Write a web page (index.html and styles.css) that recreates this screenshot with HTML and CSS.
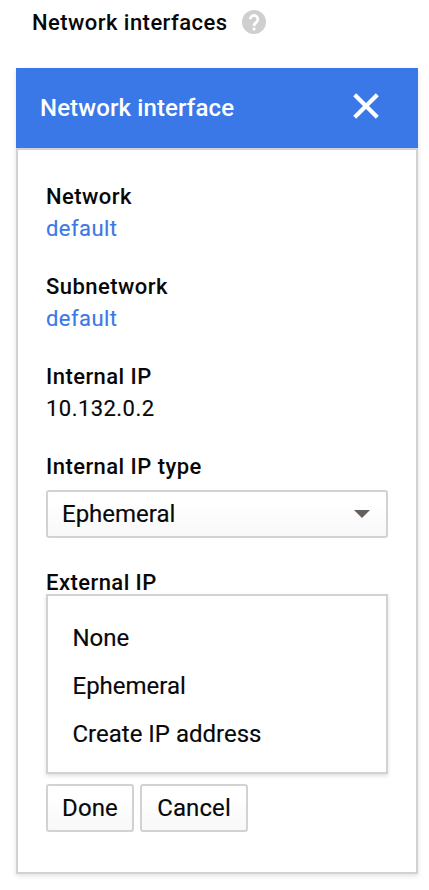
FILE: index.html
```html
<!DOCTYPE html>
<html lang="en">
<head>
<meta charset="utf-8">
<title>Network interfaces</title>
<link rel="stylesheet" href="styles.css">
</head>
<body>
<main class="page">
  <h1 class="title"><span class="title-text">Network interfaces</span>
    <svg class="help" width="24" height="24" viewBox="0 0 24 24" aria-hidden="true"><circle cx="12" cy="12" r="12" fill="#cfcfcf"/><path d="M8.2 9.2a3.8 3.8 0 1 1 6.4 2.8c-1.5 1.3-2.6 2-2.6 4" fill="none" stroke="#fff" stroke-width="2.7"/><rect x="10.6" y="17.6" width="2.8" height="2.8" fill="#fff"/></svg>
  </h1>
  <section class="card">
    <header class="card-header">
      <h2 class="card-title"><span class="card-title-text">Network interface</span></h2>
      <svg class="close" width="26" height="26" viewBox="0 0 26 26" aria-hidden="true"><path d="M1.7 1.7l22.6 22.6M24.3 1.7L1.7 24.3" stroke="#fff" stroke-width="4.2"/></svg>
    </header>
    <div class="card-body">
      <div class="field"><div class="label">Network</div><a class="value link">default</a></div>
      <div class="field"><div class="label">Subnetwork</div><a class="value link">default</a></div>
      <div class="field"><div class="label">Internal IP</div><div class="value">10.132.0.2</div></div>
      <div class="field"><div class="label">Internal IP type</div>
        <div class="select control"><span>Ephemeral</span><svg width="16" height="8" viewBox="0 0 16 8" aria-hidden="true"><path d="M0 0h16L8 8z" fill="#655f5c"/></svg></div>
      </div>
      <div class="label">External IP</div>
      <ul class="menu">
        <li>None</li>
        <li>Ephemeral</li>
        <li>Create IP address</li>
      </ul>
      <div class="actions">
        <button class="control button done">Done</button>
        <button class="control button cancel">Cancel</button>
      </div>
    </div>
  </section>
</main>
</body>
</html>
```
FILE: styles.css
```css
* { box-sizing: border-box; }

body {
  margin: 0;
  background: #fff;
  color: #080808;
  font-family: Roboto, "Liberation Sans", sans-serif;
  font-size: 22px;
}

.page {
  height: 890px;
  padding: 6px 11px 0 16px;
}

.title {
  display: flex;
  align-items: center;
  gap: 14px;
  height: 32px;
  margin: 0 0 30px;
  padding-left: 16px;
  font-size: 22px;
  font-weight: 500;
  letter-spacing: 0.45px;
}

.card { box-shadow: 0 2px 5px rgba(0, 0, 0, 0.12); }

.card-header {
  display: flex;
  align-items: center;
  justify-content: space-between;
  height: 80px;
  padding: 0 39px 0 24px;
  background: #3b78e7;
  color: #fff;
}

.close { margin-top: -4px; }

.card-title {
  margin: 0;
  font-size: 24px;
  font-weight: 500;
  letter-spacing: 0.12px;
}

.card-body {
  height: 726px;
  padding: 31px 28px 0;
  border: 2px solid #d2d2d2;
}

.field { margin-bottom: 26px; }

.label,
.value {
  display: block;
  height: 32px;
  line-height: 32px;
  letter-spacing: 0.45px;
}

.label { font-weight: 500; }

.value,
.control,
.menu { -webkit-text-stroke: 0.15px currentColor; }

.link { color: #3b78e7; }

.control {
  height: 48px;
  border: 2px solid #d2d2d2;
  border-radius: 3px;
  background: linear-gradient(#fff 20%, #f8f8f8);
  color: #080808;
  font-family: inherit;
  font-size: 24px;
}

.select {
  display: flex;
  align-items: center;
  justify-content: space-between;
  width: 342px;
  margin: 7px 0 29px;
  padding: 0 16px 0 14px;
}

.menu {
  position: relative;
  width: 342px;
  height: 180px;
  margin: -5px 0 10px;
  padding: 18px 24px 0 24.5px;
  border: 2px solid #d2d2d2;
  background: #fff;
  box-shadow: 0 2px 4px rgba(0, 0, 0, 0.13);
  font-size: 24px;
  line-height: 48px;
  list-style: none;
}

.actions {
  display: flex;
  gap: 6px;
}

.button {
  padding: 0;
  letter-spacing: 0.1px;
}

.done { width: 88px; }

.cancel { width: 108px; }
```
